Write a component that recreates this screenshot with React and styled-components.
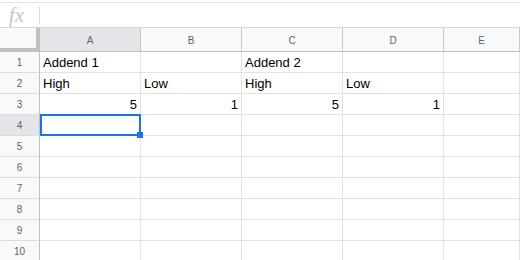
import React from 'react';
import styled, { createGlobalStyle } from 'styled-components';

const GlobalStyle = createGlobalStyle`
  html, body {
    margin: 0;
    padding: 0;
    background: #fff;
    overflow: hidden;
  }
  body {
    font-family: "Liberation Sans", Arial, sans-serif;
  }
`;

const Page = styled.div`
  width: 520px;
  height: 260px;
  overflow: hidden;
  padding-top: 2px;
  box-sizing: border-box;
`;

// formula bar across the top
const FormulaBar = styled.div`
  display: flex;
  align-items: center;
  height: 24px;
  border-top: 1px solid #e3e3e3;
  border-bottom: 1px solid #d4d4d4;
`;

const FxLabel = styled.div`
  width: 39px;
  padding-left: 9px;
  box-sizing: border-box;
  font-family: "Liberation Serif", "Times New Roman", serif;
  font-style: italic;
  font-size: 20px;
  color: #c6c6c6;
  letter-spacing: 0.5px;
  line-height: 24px;
`;

const FxDivider = styled.div`
  width: 1px;
  height: 18px;
  background: #dadce0;
`;

const Sheet = styled.div`
  display: grid;
  grid-template-columns: 40px 101px 101px 101px 101px 1fr;
  grid-auto-rows: 21px;
  grid-template-rows: 24px;
`;

const Corner = styled.div`
  background: #f8f9fa;
  border-right: 4px solid #c0c0c0;
  border-bottom: 4px solid #c0c0c0;
  box-sizing: border-box;
`;

const ColHeader = styled.div`
  display: flex;
  align-items: center;
  justify-content: center;
  background: ${({ active }) => (active ? '#e3e5e8' : '#f8f9fa')};
  border-right: 1px solid #c9c9c9;
  border-bottom: 1px solid #c0c0c0;
  box-sizing: border-box;
  font-size: 10px;
  color: #5f6368;
  padding-top: 1px;
`;

const RowHeader = styled.div`
  display: flex;
  align-items: center;
  justify-content: center;
  background: ${({ active }) => (active ? '#e3e5e8' : '#f8f9fa')};
  border-right: 1px solid #c0c0c0;
  border-bottom: 1px solid #dcdcdc;
  box-sizing: border-box;
  font-size: 10px;
  color: #5f6368;
  padding-top: 1px;
`;

const Cell = styled.div`
  position: relative;
  display: flex;
  align-items: center;
  justify-content: ${({ numeric }) => (numeric ? 'flex-end' : 'flex-start')};
  padding: 1px 3px 0 3px;
  border-right: 1px solid #e2e2e2;
  border-bottom: 1px solid #e2e2e2;
  box-sizing: border-box;
  font-size: 13px;
  color: #000;
  white-space: nowrap;
`;

const Selection = styled.div`
  position: absolute;
  left: 0;
  top: -1px;
  width: 101px;
  height: 22px;
  border: 2px solid #1a73e8;
  box-sizing: border-box;
  z-index: 2;
`;

const Handle = styled.div`
  position: absolute;
  right: -4px;
  bottom: -4px;
  width: 6px;
  height: 6px;
  background: #1a73e8;
`;

const columns = ['A', 'B', 'C', 'D', 'E'];

const data = {
  1: ['Addend 1', '', 'Addend 2', '', ''],
  2: ['High', 'Low', 'High', 'Low', ''],
  3: [5, 1, 5, 1, ''],
};

const activeRow = 4;
const activeCol = 0;

export default function App() {
  const rows = Array.from({ length: 10 }, (_, i) => i + 1);
  return (
    <Page>
      <GlobalStyle />
      <FormulaBar>
        <FxLabel>fx</FxLabel>
        <FxDivider />
      </FormulaBar>
      <Sheet>
        <Corner />
        {columns.map((c, i) => (
          <ColHeader key={c} active={i === activeCol}>
            {c}
          </ColHeader>
        ))}
        {rows.map((r) => (
          <React.Fragment key={r}>
            <RowHeader active={r === activeRow}>{r}</RowHeader>
            {columns.map((c, i) => {
              const value = data[r] ? data[r][i] : '';
              const selected = r === activeRow && i === activeCol;
              return (
                <Cell key={c} numeric={typeof value === 'number'}>
                  {value}
                  {selected && (
                    <Selection>
                      <Handle />
                    </Selection>
                  )}
                </Cell>
              );
            })}
          </React.Fragment>
        ))}
      </Sheet>
    </Page>
  );
}
